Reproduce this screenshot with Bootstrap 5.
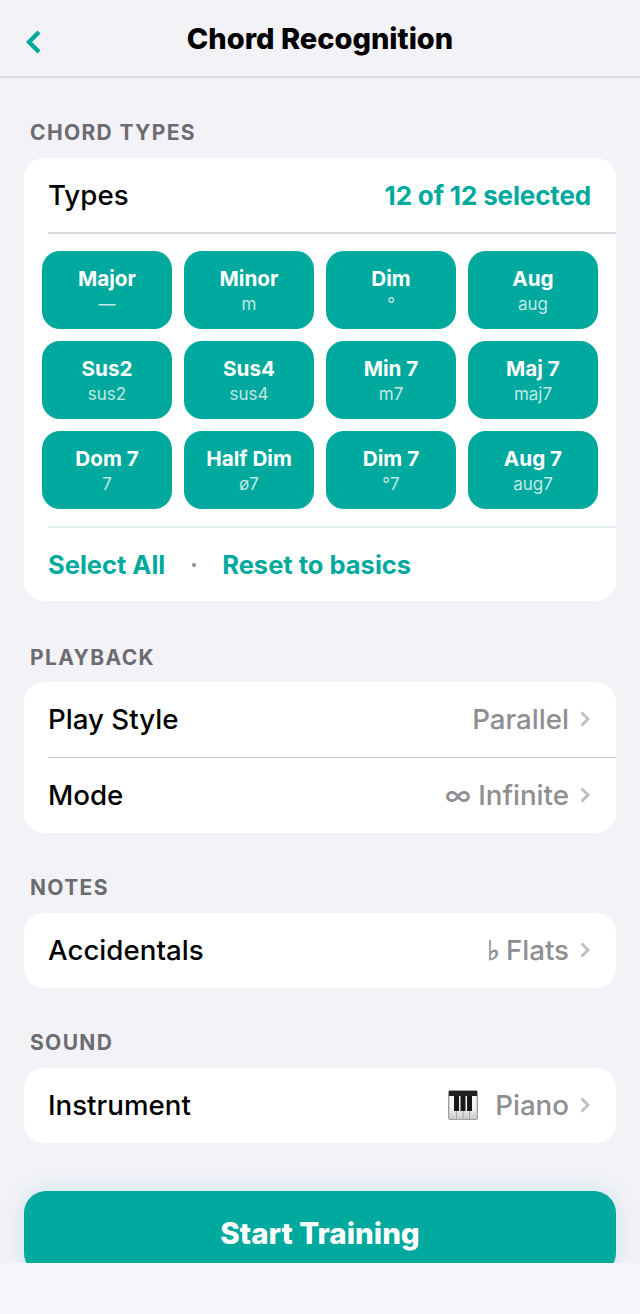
<!DOCTYPE html>
<html lang="en">
<head>
  <meta charset="UTF-8">
  <meta name="viewport" content="width=device-width, initial-scale=1.0">
  <title>Chord Recognition</title>
  <link rel="stylesheet" href="https://cdn.jsdelivr.net/npm/bootstrap@5.3.0/dist/css/bootstrap.min.css">
  <style>
    html, body { height: 1314px; overflow: hidden; }
    body { background-color: #f2f2f7; font-family: Inter, "Liberation Sans", sans-serif; color: #000; position: relative; }
    .top-bar { height: 78px; border-bottom: 2px solid #dcdce0; padding: 0 24px; position: relative; }
    .top-title { font-size: 29px; font-weight: 800; line-height: 77px; text-align: center; }
    .back-btn { position: absolute; left: 22px; top: 30px; line-height: 0; }
    .sec-label { font-size: 21px; font-weight: 700; color: #6c6c70; letter-spacing: 1.350px; line-height: 24px; margin: 0 0 13px 6px; }
    .label-first { margin-top: 43px; }
    .label-next { margin-top: 45px; margin-bottom: 12px; }
    .label-low { margin-top: 43px; }
    .sec-wrap { padding: 0 24px; }
    .panel { background: #fff; border-radius: 20px; }
    .row-item { height: 75px; padding-left: 24px; padding-right: 25px; font-size: 27.700px; font-weight: 500; }
    .row-head { height: 74px; }
    .head-name { padding-top: 2px; }
    .row-line { border-bottom: 1px solid #c6c6c8; height: 0; margin-left: 24px; }
    .row-value { color: #8e8e93; font-weight: 500; white-space: nowrap; }
    .teal-text { color: #00a99d; font-weight: 700; }
    .count-text { font-size: 26px; letter-spacing: -0.150px; }
    .chip-grid { display: grid; grid-template-columns: repeat(4, 130px); gap: 12px; padding: 17px 18px 17px; }
    .chip { background: #00a99d; color: #fff; height: 78px; border-radius: 18px; text-align: center; padding-top: 15px; }
    .chip-name { font-size: 20.700px; font-weight: 700; line-height: 26px; }
    .chip-sym { font-size: 17px; line-height: 24px; color: rgba(255,255,255,.75); }
    .line-light { border-bottom: 2px solid #e3eef0; margin-left: 24px; height: 0; }
    .line-grey { border-bottom: 2px solid #dcdce0; margin-left: 24px; height: 0; }
    .action-row { height: 73px; padding-left: 24px; padding-top: 1px; font-size: 25.500px; gap: 27px; }
    .action-row > .dot-sep { margin: 0 -1px 0 0; }
    .dot-sep { width: 4px; height: 4px; border-radius: 50%; background: #8e8e93; }
    .start-btn { display: block; width: 100%; height: 84px; margin-top: 48px; background: #00a99d; color: #fff; border: 0; border-radius: 22px; font-size: 29.500px; font-weight: 800; padding: 0; box-shadow: 0 0 22px rgba(0,169,157,.16); }
    .bottom-cover { position: absolute; left: 0; right: 0; top: 1263px; height: 51px; background: #f5f6fa; }
    .piano-icon { margin-right: 17px; }
    .chev { margin-left: 12px; }
    .flat-sign { font-family: "DejaVu Sans", sans-serif; font-size: 27px; line-height: 1; font-weight: 700; -webkit-text-stroke: 0.700px #8e8e93; margin-right: 6px; }
    .inf-sign { margin-right: 7px; }
  </style>
</head>
<body>
  <div class="top-bar">
    <a class="back-btn" href="#">
      <svg width="20" height="24" viewBox="0 0 20 24"><path d="M17 2 7 12l10 10" fill="none" stroke="#00a99d" stroke-width="4.400"/></svg>
    </a>
    <div class="top-title">Chord Recognition</div>
  </div>

  <div class="sec-wrap">
    <div class="sec-label label-first">CHORD TYPES</div>
    <div class="panel">
      <div class="d-flex justify-content-between align-items-center row-item row-head">
        <span class="head-name">Types</span>
        <span class="teal-text count-text">12 of 12 selected</span>
      </div>
      <div class="line-grey"></div>
      <div class="chip-grid">
        <div class="chip"><div class="chip-name">Major</div><div class="chip-sym">—</div></div>
        <div class="chip"><div class="chip-name">Minor</div><div class="chip-sym">m</div></div>
        <div class="chip"><div class="chip-name">Dim</div><div class="chip-sym">°</div></div>
        <div class="chip"><div class="chip-name">Aug</div><div class="chip-sym">aug</div></div>
        <div class="chip"><div class="chip-name">Sus2</div><div class="chip-sym">sus2</div></div>
        <div class="chip"><div class="chip-name">Sus4</div><div class="chip-sym">sus4</div></div>
        <div class="chip"><div class="chip-name">Min 7</div><div class="chip-sym">m7</div></div>
        <div class="chip"><div class="chip-name">Maj 7</div><div class="chip-sym">maj7</div></div>
        <div class="chip"><div class="chip-name">Dom 7</div><div class="chip-sym">7</div></div>
        <div class="chip"><div class="chip-name">Half Dim</div><div class="chip-sym">ø7</div></div>
        <div class="chip"><div class="chip-name">Dim 7</div><div class="chip-sym">°7</div></div>
        <div class="chip"><div class="chip-name">Aug 7</div><div class="chip-sym">aug7</div></div>
      </div>
      <div class="line-light"></div>
      <div class="d-flex align-items-center action-row teal-text">
        <span>Select All</span>
        <span class="dot-sep"></span>
        <span>Reset to basics</span>
      </div>
    </div>

    <div class="sec-label label-next">PLAYBACK</div>
    <div class="panel">
      <div class="d-flex justify-content-between align-items-center row-item">
        <span>Play Style</span>
        <span class="d-flex align-items-center row-value">Parallel
          <svg class="chev" width="10" height="16" viewBox="0 0 10 16"><path d="M.5 1.500 7 8 .5 14.500" fill="none" stroke="#c0c0c4" stroke-width="3"/></svg>
        </span>
      </div>
      <div class="row-line"></div>
      <div class="d-flex justify-content-between align-items-center row-item">
        <span>Mode</span>
        <span class="d-flex align-items-center row-value"><span class="inf-sign">∞</span>Infinite
          <svg class="chev" width="10" height="16" viewBox="0 0 10 16"><path d="M.5 1.500 7 8 .5 14.500" fill="none" stroke="#c0c0c4" stroke-width="3"/></svg>
        </span>
      </div>
    </div>

    <div class="sec-label label-low">NOTES</div>
    <div class="panel">
      <div class="d-flex justify-content-between align-items-center row-item">
        <span>Accidentals</span>
        <span class="d-flex align-items-center row-value"><span class="flat-sign">♭</span>Flats
          <svg class="chev" width="10" height="16" viewBox="0 0 10 16"><path d="M.5 1.500 7 8 .5 14.500" fill="none" stroke="#c0c0c4" stroke-width="3"/></svg>
        </span>
      </div>
    </div>

    <div class="sec-label label-low">SOUND</div>
    <div class="panel">
      <div class="d-flex justify-content-between align-items-center row-item">
        <span>Instrument</span>
        <span class="d-flex align-items-center row-value">
          <svg class="piano-icon" width="30" height="30" viewBox="0 0 30 30">
            <defs><linearGradient id="keyFade" x1="0" y1="0" x2="0" y2="1"><stop offset="0.500" stop-color="#f6f6f6"/><stop offset="1" stop-color="#c9c9c9"/></linearGradient></defs>
            <rect x="0.500" y="0.500" width="29" height="29" rx="1.500" fill="#d0d0d0" stroke="#a0a0a0"/>
            <rect x="1" y="1" width="28" height="5" fill="#222"/>
            <rect x="2" y="6" width="26" height="23" fill="url(#keyFade)"/>
            <path d="M8.500 20v9M15 20v9M21.500 20v9" stroke="#a8a8a8" stroke-width="1"/>
            <rect x="6" y="6" width="5" height="15" fill="#181818"/>
            <rect x="12.500" y="6" width="5" height="15" fill="#181818"/>
            <rect x="19" y="6" width="5" height="15" fill="#181818"/>
          </svg>
          Piano
          <svg class="chev" width="10" height="16" viewBox="0 0 10 16"><path d="M.5 1.500 7 8 .5 14.500" fill="none" stroke="#c0c0c4" stroke-width="3"/></svg>
        </span>
      </div>
    </div>

    <button class="start-btn" type="button">Start Training</button>
  </div>
  <div class="bottom-cover"></div>
  <script src="https://cdn.jsdelivr.net/npm/bootstrap@5.3.0/dist/js/bootstrap.bundle.min.js"></script>
</body>
</html>
